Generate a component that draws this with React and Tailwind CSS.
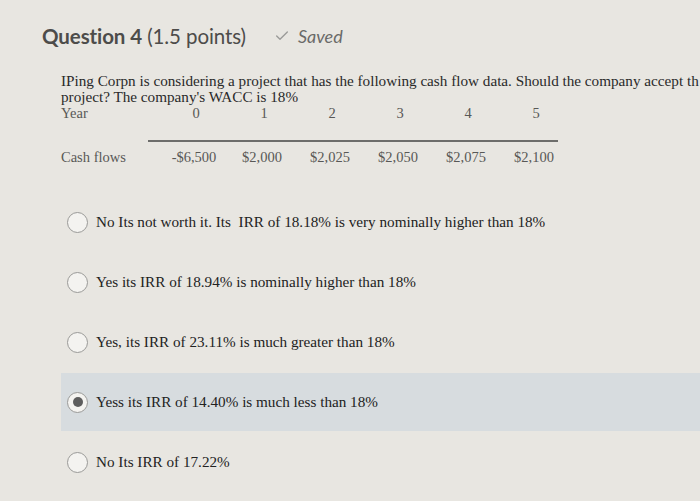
import { Check } from 'lucide-react'

const YEARS = ['0', '1', '2', '3', '4', '5']
const FLOWS = ['-$6,500', '$2,000', '$2,025', '$2,050', '$2,075', '$2,100']

const OPTIONS = [
  { text: 'No Its not worth it. Its  IRR of 18.18% is very nominally higher than 18%' },
  { text: 'Yes its IRR of 18.94% is nominally higher than 18%' },
  { text: "Yes, its IRR of 23.11% is much greater than 18%" },
  { text: 'Yess its IRR of 14.40% is much less than 18%', selected: true },
  { text: 'No Its IRR of 17.22%' },
]

const serif = { fontFamily: '"Liberation Serif", "Times New Roman", serif' }

function Radio({ selected }) {
  return (
    <div className="w-[21px] h-[21px] rounded-full border-[1.5px] border-[#9a9a98] bg-[#f4f3f0] flex items-center justify-center shrink-0">
      {selected && <div className="w-[10px] h-[10px] rounded-full bg-[#5d5d5d]" />}
    </div>
  )
}

export default function App() {
  return (
    <div className="w-[700px] h-[501px] overflow-hidden bg-[#e8e6e1] relative">
      {/* Header */}
      <div className="flex items-center pl-[42px] pt-[22px] h-[50px]">
        <h2 className="text-[20.5px] text-[#4d4c4a] font-['Lato',sans-serif] tracking-[-0.1px] whitespace-nowrap">
          <span className="font-bold">Question 4</span> <span>(1.5 points)</span>
        </h2>
        <Check size={16} strokeWidth={2} className="ml-[28px] text-[#9a9a98]" />
        <span className="ml-[8px] text-[18px] italic text-[#6a6a68] font-['Lato',sans-serif]">Saved</span>
      </div>

      {/* Question text */}
      <div className="pl-[61px] pt-[23px] text-[15.2px] leading-[16px] text-[#2a2a2a] whitespace-nowrap" style={serif}>
        <p>IPing Corpn is considering a project that has the following cash flow data. Should the company accept th</p>
        <p>project?  The company's WACC is 18%</p>

        {/* Cash flow table */}
        <div className="text-[#585856] text-[14.5px]">
          <div className="flex items-center h-[16px]">
            <div className="w-[101px]">Year</div>
            {YEARS.map(y => (
              <div key={y} className="w-[68px] text-center">{y}</div>
            ))}
          </div>
          <div className="ml-[87px] w-[410px] mt-[19px] border-t-[2px] border-[#6d6d6b]" />
          <div className="flex items-center h-[18px] mt-[6px]">
            <div className="w-[99px]">Cash flows</div>
            {FLOWS.map(f => (
              <div key={f} className="w-[68px] text-center">{f}</div>
            ))}
          </div>
        </div>
      </div>

      {/* Answer options */}
      <div className="mt-[27px] ml-[61px] flex flex-col">
        {OPTIONS.map(o => (
          <div
            key={o.text}
            className={`flex items-center h-[58px] mb-[2px] pl-[6px] gap-[8px] ${o.selected ? 'bg-[#d7dcdf]' : ''}`}
          >
            <Radio selected={o.selected} />
            <span className="text-[15.2px] text-[#222] whitespace-pre" style={serif}>{o.text}</span>
          </div>
        ))}
      </div>
    </div>
  )
}
